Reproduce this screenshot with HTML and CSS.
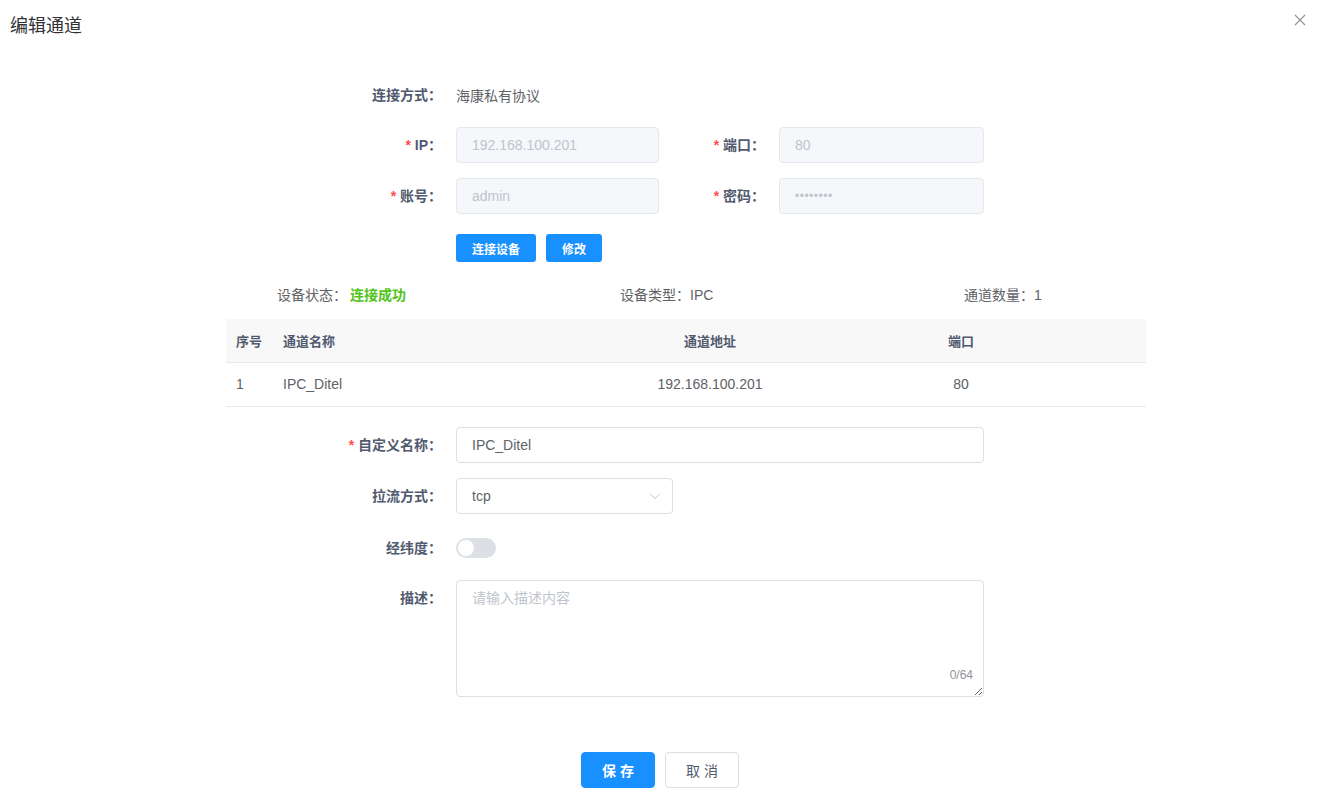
FILE: index.html
```html
<html>
    <head>
        <meta charset="utf-8">
        <title>编辑通道</title>
        <link rel="stylesheet" href="styles.css">
    </head>
    <body>
        <div class="dialog">
            <div class="dialog-header">
                <span class="dialog-title">编辑通道</span>
                <svg class="dialog-close" width="12" height="12" viewBox="0 0 12 12"><path d="M1 1L11 11M11 1L1 11" stroke="#909399" stroke-width="1.2" fill="none"/></svg>
            </div>

            <div class="form form-top">
                <div class="row">
                    <div class="label">连接方式：</div>
                    <div class="value">海康私有协议</div>
                </div>
                <div class="row gap-14">
                    <div class="label"><span class="req">*</span> IP：</div>
                    <div class="input disabled w-left">192.168.100.201</div>
                    <div class="label label-right"><span class="req">*</span> 端口：</div>
                    <div class="input disabled w-right">80</div>
                </div>
                <div class="row gap-15">
                    <div class="label"><span class="req">*</span> 账号：</div>
                    <div class="input disabled w-left">admin</div>
                    <div class="label label-right"><span class="req">*</span> 密码：</div>
                    <div class="input disabled w-right"><span class="dots">••••••••</span></div>
                </div>
                <div class="row row-small gap-20">
                    <div class="label"></div>
                    <button class="btn-small btn-wide">连接设备</button>
                    <button class="btn-small">修改</button>
                </div>
            </div>

            <div class="status">
                <div class="status-item s1">设备状态：<span class="ok">连接成功</span></div>
                <div class="status-item s2">设备类型：IPC</div>
                <div class="status-item s3">通道数量：1</div>
            </div>

            <table class="channels">
                <tr>
                    <th class="c-no">序号</th>
                    <th class="c-name">通道名称</th>
                    <th class="c-addr center">通道地址</th>
                    <th class="c-port center">端口</th>
                </tr>
                <tr>
                    <td>1</td>
                    <td>IPC_Ditel</td>
                    <td class="center">192.168.100.201</td>
                    <td class="center">80</td>
                </tr>
            </table>

            <div class="form form-bottom">
                <div class="row">
                    <div class="label"><span class="req">*</span> 自定义名称：</div>
                    <div class="input w-full">IPC_Ditel</div>
                </div>
                <div class="row gap-15">
                    <div class="label">拉流方式：</div>
                    <div class="input select">
                        <span>tcp</span>
                        <svg width="12" height="8" viewBox="0 0 12 8"><path d="M1 1.5L6 6.5L11 1.5" stroke="#c0c4cc" stroke-width="1" fill="none"/></svg>
                    </div>
                </div>
                <div class="row gap-16">
                    <div class="label">经纬度：</div>
                    <div class="switch"><div class="knob"></div></div>
                </div>
                <div class="row row-top gap-14">
                    <div class="label">描述：</div>
                    <div class="textarea-wrap">
                        <textarea placeholder="请输入描述内容"></textarea>
                        <span class="count">0/64</span>
                    </div>
                </div>
            </div>

            <div class="footer">
                <button class="btn btn-primary">保 存</button>
                <button class="btn btn-default">取 消</button>
            </div>
        </div>
    </body>
</html>
```

FILE: styles.css
```css
*{
    box-sizing: border-box;
}
body{
    margin: 0;
    background: #fff;
    font-family: "Liberation Sans", "Noto Sans CJK SC", sans-serif;
    font-size: 14px;
    color: #515a6e;
}
.dialog-header{
    height: 48px;
    display: flex;
    align-items: center;
    justify-content: space-between;
    padding: 0 14px 0 10px;
}
.dialog-title{
    font-size: 18px;
    color: #303133;
}
.dialog-close{
    margin-top: -9px;
}

.form{
    margin-left: 320px;
}
.form-top{
    margin-top: 29px;
}
.row{
    display: flex;
    align-items: center;
    height: 36px;
}
.row-small{
    height: 28px;
}
.row-top{
    align-items: flex-start;
    height: auto;
}
.gap-14{ margin-top: 14px; }
.gap-15{ margin-top: 15px; }
.gap-16{ margin-top: 16px; }
.gap-20{ margin-top: 20px; }

.label{
    width: 122px;
    margin-right: 14px;
    text-align: right;
    font-weight: 700;
    color: #515a6e;
    line-height: 36px;
    white-space: nowrap;
}
.label-right{
    width: 106px;
}
.req{
    color: #ff4d4f;
    font-weight: 700;
}
.value{
    color: #606266;
}
.input{
    height: 36px;
    line-height: 34px;
    border: 1px solid #dcdfe6;
    border-radius: 4px;
    padding: 0 15px;
    color: #606266;
    background: #fff;
}
.input.disabled{
    background: #f5f7fa;
    border-color: #e4e7ed;
    color: #c0c4cc;
}
.dots{
    font-size: 12px;
    letter-spacing: 0.5px;
    vertical-align: 1px;
}
.w-left{ width: 203px; }
.w-right{ width: 205px; }
.w-full{ width: 528px; }
.select{
    width: 217px;
    display: flex;
    justify-content: space-between;
    align-items: center;
    padding-right: 11px;
}

.btn-small{
    height: 28px;
    width: 56px;
    border: none;
    border-radius: 3px;
    background: #1890ff;
    color: #fff;
    font-family: inherit;
    font-size: 12px;
    font-weight: 700;
    margin-right: 10px;
    padding: 0;
}
.btn-wide{
    width: 80px;
}

.status{
    display: flex;
    margin-top: 23px;
    height: 20px;
    line-height: 20px;
    color: #606266;
}
.status-item.s1{ margin-left: 277px; width: 343px; }
.status-item.s2{ width: 344px; }
.ok{
    color: #52c41a;
    font-weight: 700;
    margin-left: 3px;
}

.channels{
    margin: 14px 0 0 226px;
    width: 920px;
    border-collapse: collapse;
    table-layout: fixed;
    font-size: 14px;
}
.channels th{
    height: 43px;
    background: #f8f8f9;
    font-size: 13px;
    font-weight: 700;
    color: #515a6e;
    text-align: left;
    padding: 0 10px;
    border-bottom: 1px solid #e8eaec;
}
.channels td{
    height: 44px;
    padding: 0 10px;
    font-size: 14px;
    color: #606266;
    border-bottom: 1px solid #e8eaec;
}
.channels .center{
    text-align: center;
}
.c-no{ width: 47px; }
.c-name{ width: 371px; }
.c-addr{ width: 132px; }

.form-bottom{
    margin-top: 20px;
}
.switch{
    width: 40px;
    height: 20px;
    border-radius: 10px;
    background: #dcdfe6;
    position: relative;
}
.knob{
    position: absolute;
    left: 2px;
    top: 2px;
    width: 16px;
    height: 16px;
    border-radius: 50%;
    background: #fff;
}
.textarea-wrap{
    position: relative;
    width: 528px;
    height: 117px;
}
textarea{
    width: 100%;
    height: 100%;
    border: 1px solid #dcdfe6;
    border-radius: 4px;
    padding: 5px 15px;
    font-family: inherit;
    font-size: 14px;
    line-height: 24px;
    color: #606266;
    resize: vertical;
    display: block;
}
textarea::placeholder{
    color: #c0c4cc;
}
.count{
    position: absolute;
    right: 11px;
    bottom: 15px;
    font-size: 12px;
    color: #909399;
}

.footer{
    margin-top: 55px;
    display: flex;
    justify-content: center;
    gap: 10px;
}
.btn{
    height: 36px;
    width: 74px;
    border-radius: 4px;
    font-family: inherit;
    font-size: 14px;
    padding: 0;
}
.btn-primary{
    background: #1890ff;
    border: 1px solid #1890ff;
    color: #fff;
    font-weight: 700;
}
.btn-default{
    background: #fff;
    border: 1px solid #dcdee2;
    color: #515a6e;
}
```
